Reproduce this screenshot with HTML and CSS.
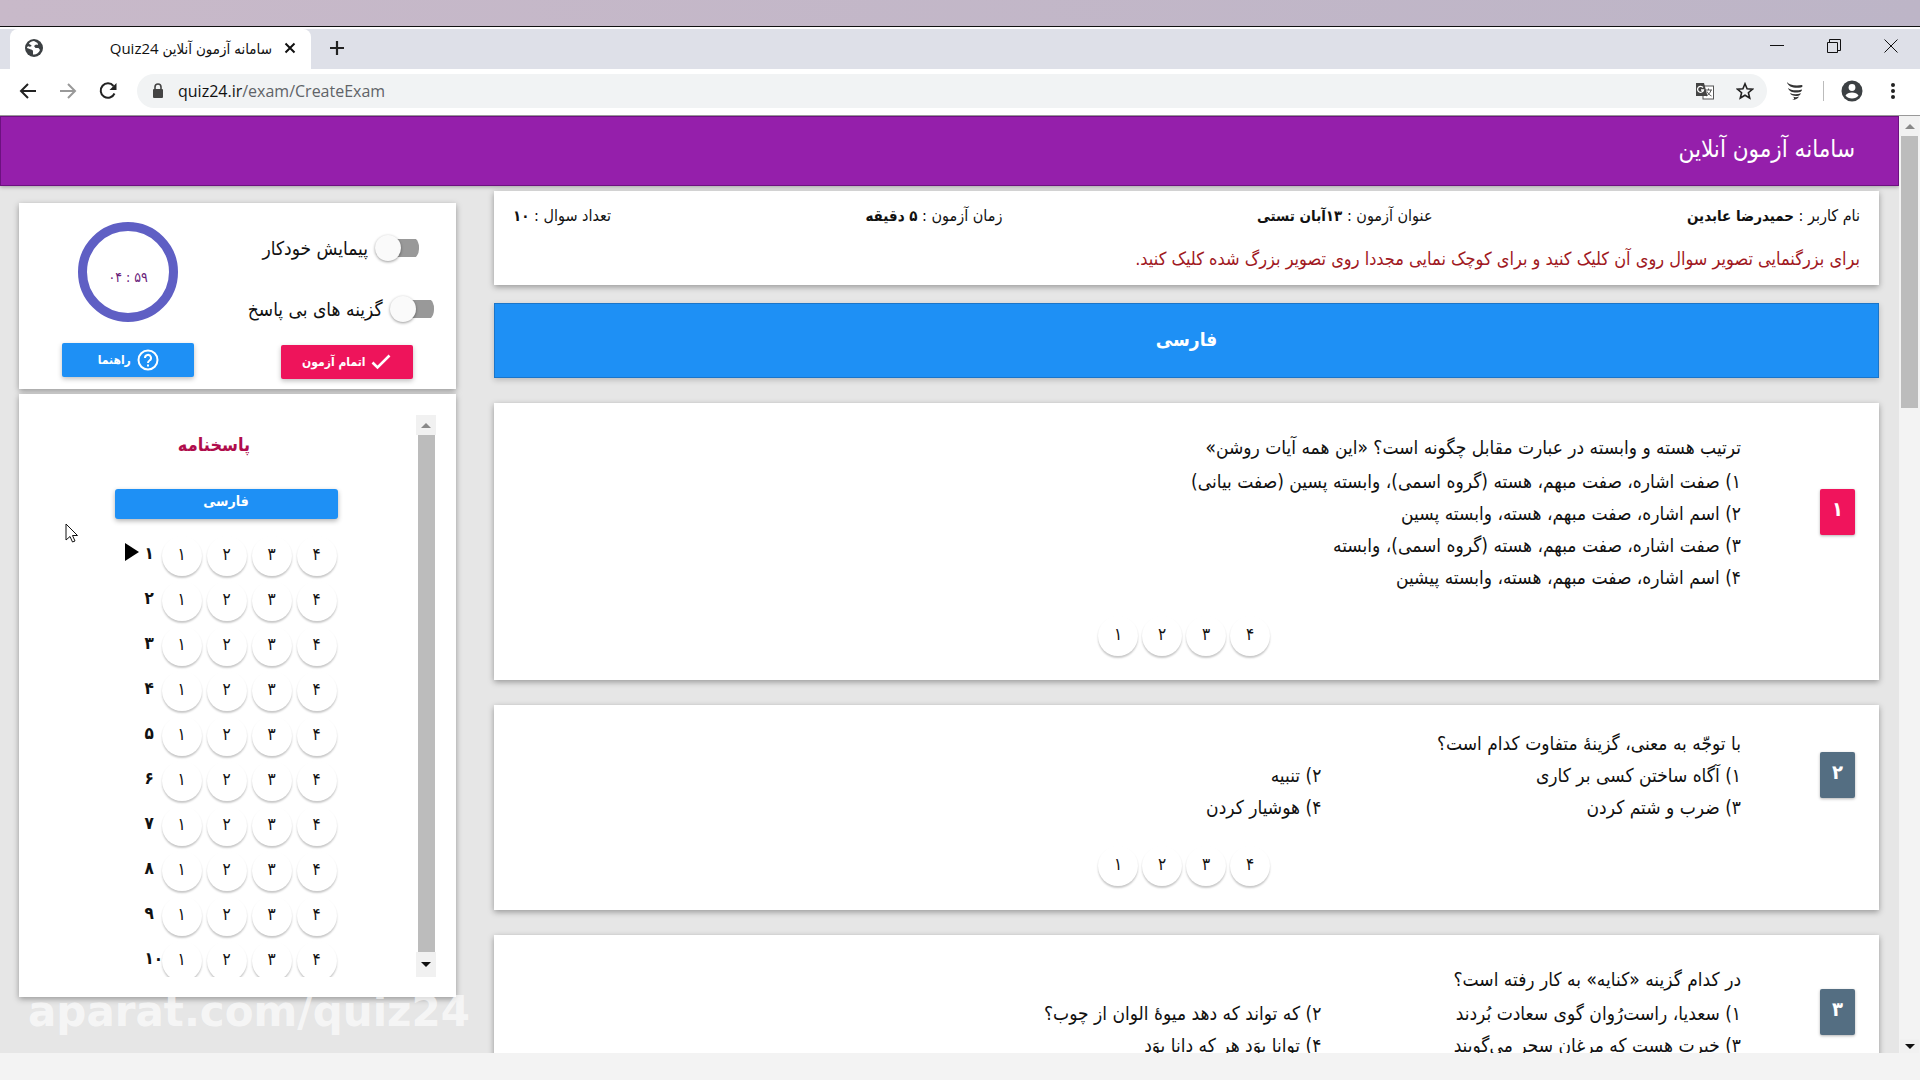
FILE: index.html
```html
<!DOCTYPE html>
<html lang="fa">
<head>
<meta charset="utf-8">
<title>سامانه آزمون آنلاین Quiz24</title>
<link rel="stylesheet" href="styles.css">
</head>
<body>
<div class="desktop-strip"></div>
<header class="browser">
  <div class="tabs">
    <span class="tab-previous"></span>
    <div class="tab">
      <svg class="globe" width="18" height="18" viewBox="0 0 18 18"><circle cx="9" cy="9" r="9" fill="#3c4043"/><path d="M9 2c-2 0-4 1-5 2.500 0 1 2 1 2.500 2s-1.500 1.500-2.500 1-2 .5-2 1.500l4 1.500c1.500 0 2 1 2 2v3c3 .5 6-1.500 7-4.500l-1.500-2h-3l-1.500-2 2-1.500 2 .5-.5-2z" fill="#fff"/></svg>
      <span class="tab-title" dir="rtl">سامانه آزمون آنلاین Quiz24</span>
      <button class="icon-button" aria-label="Close tab"><svg width="12" height="12" viewBox="0 0 12 12" stroke="#111" stroke-width="2"><path d="M1.500 1.500l9 9M10.500 1.500l-9 9"/></svg></button>
    </div>
    <button class="icon-button new-tab" aria-label="New tab"><svg width="16" height="16" viewBox="0 0 16 16" stroke="#222" stroke-width="2.200"><path d="M8 1v14M1 8h14"/></svg></button>
    <div class="window-controls">
      <button class="icon-button" aria-label="Minimize"><svg width="14" height="14" viewBox="0 0 14 14" stroke="#111"><path d="M0 6.500h14"/></svg></button>
      <button class="icon-button" aria-label="Restore"><svg width="14" height="14" viewBox="0 0 14 14" stroke="#111" fill="none"><path d="M.5 3.500h10v10H.5zM2.500 3.500v-3h11v11h-3"/></svg></button>
      <button class="icon-button" aria-label="Close"><svg width="14" height="14" viewBox="0 0 14 14" stroke="#111"><path d="M.5.5l13 13M13.500.5l-13 13"/></svg></button>
    </div>
  </div>
  <div class="toolbar">
    <button class="icon-button" aria-label="Back"><svg width="18" height="18" viewBox="0 0 18 18" fill="none" stroke="#222" stroke-width="2"><path d="M17 9H2M9 2L2 9l7 7"/></svg></button>
    <button class="icon-button" aria-label="Forward"><svg width="18" height="18" viewBox="0 0 18 18" fill="none" stroke="#999" stroke-width="2"><path d="M1 9h15M9 2l7 7-7 7"/></svg></button>
    <button class="icon-button" aria-label="Reload"><svg width="18" height="18" viewBox="0 0 18 18" fill="none" stroke="#222" stroke-width="2"><path d="M15.500 11.500A7.200 7.200 0 1 1 14.500 4"/><path d="M17.500 1v7h-7z" fill="#222" stroke="none"/></svg></button>
    <div class="address">
      <svg width="12" height="16" viewBox="0 0 12 16"><rect x="1" y="6" width="10" height="9" rx="1" fill="#444"/><path d="M3 7V4a3 3 0 0 1 6 0v3" fill="none" stroke="#444" stroke-width="1.600"/></svg>
      <span class="url">quiz24.ir<span class="url-path">/exam/CreateExam</span></span>
      <button class="icon-button translate" aria-label="Translate"><svg width="19" height="19" viewBox="0 0 19 19"><rect x="8" y="4" width="10.500" height="13" fill="#fff" stroke="#555"/><path d="M10 8h7M13.500 6.500V8M16 8c-.5 3-3 5-5 6M12 9.500c1 2 2.500 3.500 4.500 4.500" stroke="#555" fill="none"/><path d="M1 1h8l3.500 13H1z" fill="#444"/><path d="M8 5.500A3 3 0 1 0 8.500 8H6" fill="none" stroke="#fff" stroke-width="1.300"/></svg></button>
      <button class="icon-button star" aria-label="Bookmark"><svg width="18" height="18" viewBox="0 0 18 18" fill="none" stroke="#222" stroke-width="1.600"><path d="M9 1.800l2.100 5 5.400.4-4.100 3.500 1.300 5.300L9 13.200 4.300 16l1.300-5.300L1.500 7.200l5.400-.4z"/></svg></button>
    </div>
    <button class="icon-button" aria-label="Extension"><svg width="18" height="18" viewBox="0 0 18 18" fill="#333"><path d="M1 0c2 3 8 4 15 3 1 1 .5 2-1 2.500C8 6.500 2 5 1 0z"/><path d="M2 6c3 2.500 8 3 14 1.500 0 1.500-1 2.500-3 2.800C8 11 3 10 2 6z"/><path d="M4 11c3 1.500 7 1.500 11 .3-.5 1.700-2 2.500-4 2.700-3 .2-6-.5-7-3z"/><path d="M7 14.800c2 .6 4 .5 6-.2-1 2-3.500 3.400-7 3.400 2-.5 3-1.500 1-3.200z"/></svg></button>
    <span class="divider"></span>
    <button class="icon-button" aria-label="Profile"><svg width="22" height="22" viewBox="0 0 22 22"><circle cx="11" cy="11" r="10.500" fill="#3c4043"/><circle cx="11" cy="7.500" r="3.400" fill="#fff"/><path d="M4.500 15.500c2-4 11-4 13 0-2.500 4-10.500 4-13 0z" fill="#fff"/></svg></button>
    <button class="icon-button menu" aria-label="Menu"><svg width="6" height="18" viewBox="0 0 6 18" fill="#222"><circle cx="3" cy="3" r="2"/><circle cx="3" cy="9" r="2"/><circle cx="3" cy="15" r="2"/></svg></button>
  </div>
</header>

<div class="viewport">
  <div class="page">
    <div class="site-bar" dir="rtl"><h1>سامانه آزمون آنلاین</h1></div>
    <div class="columns">
      <aside class="sidebar">
        <section class="card controls">
          <div class="timer-column">
            <div class="timer"><span>۰۴ : ۵۹</span></div>
            <button class="action help" dir="rtl"><svg width="22" height="22" viewBox="0 0 22 22" fill="none" stroke="#fff" stroke-width="2"><circle cx="11" cy="11" r="9.500"/><path d="M8 9a3 3 0 1 1 4.500 2.500C11.300 12.200 11 12.500 11 14M11 15.500v2"/></svg><span>راهنما</span></button>
          </div>
          <div class="switch-column" dir="rtl">
            <label class="switch"><input type="checkbox"><span>پیمایش خودکار</span></label>
            <label class="switch"><input type="checkbox"><span>گزینه های بی پاسخ</span></label>
            <button class="action finish"><svg width="20" height="16" viewBox="0 0 20 16" fill="none" stroke="#fff" stroke-width="2.600"><path d="M1.500 8.500l5 5 12-12"/></svg><span>اتمام آزمون</span></button>
          </div>
        </section>
        <section class="card sheet">
          <div class="sheet-body">
            <h2 dir="rtl">پاسخنامه</h2>
            <div class="sheet-subject" dir="rtl">فارسی</div>
            <ol class="answers" id="answers"></ol>
          </div>
          <div class="scrollbar inner"><span class="arrow up"></span><span class="thumb"></span><span class="arrow down"></span></div>
        </section>
      </aside>
      <main class="exam" dir="rtl">
        <section class="card info">
          <div class="facts">
            <span>نام کاربر : <b>حمیدرضا عابدین</b></span>
            <span>عنوان آزمون : <b>۱۳آبان تستی</b></span>
            <span>زمان آزمون : <b>۵ دقیقه</b></span>
            <span>تعداد سوال : <b>۱۰</b></span>
          </div>
          <p class="note">برای بزرگنمایی تصویر سوال روی آن کلیک کنید و برای کوچک نمایی مجددا روی تصویر بزرگ شده کلیک کنید.</p>
        </section>
        <h2 class="subject">فارسی</h2>
        <article class="card question">
          <div class="question-row">
            <span class="badge current">۱</span>
            <div class="text">
              <p class="stem">ترتیب هسته و وابسته در عبارت مقابل چگونه است؟ «این همه آیات روشن»</p>
              <p>۱) صفت اشاره، صفت مبهم، هسته (گروه اسمی)، وابسته پسین (صفت بیانی)</p>
              <p>۲) اسم اشاره، صفت مبهم، هسته، وابسته پسین</p>
              <p>۳) صفت اشاره، صفت مبهم، هسته (گروه اسمی)، وابسته</p>
              <p>۴) اسم اشاره، صفت مبهم، هسته، وابسته پیشین</p>
            </div>
          </div>
          <div class="choices" dir="ltr"></div>
        </article>
        <article class="card question compact">
          <div class="question-row">
            <span class="badge">۲</span>
            <div class="text">
              <p class="stem">با توجّه به معنی، گزینهٔ متفاوت کدام است؟</p>
              <div class="pairs">
                <p>۱) آگاه ساختن کسی بر کاری</p><p>۲) تنبیه</p>
                <p>۳) ضرب و شتم کردن</p><p>۴) هوشیار کردن</p>
              </div>
            </div>
          </div>
          <div class="choices" dir="ltr"></div>
        </article>
        <article class="card question">
          <div class="question-row">
            <span class="badge">۳</span>
            <div class="text">
              <p class="stem">در کدام گزینه «کنایه» به کار رفته است؟</p>
              <div class="pairs">
                <p>۱) سعدیا، راست‌رُوان گوی سعادت بُردند</p><p>۲) که تواند که دهد میوهٔ الوان از چوب؟</p>
                <p>۳) خبرت هست که مرغان سحر می‌گویند</p><p>۴) توانا بوَد هر که دانا بوَد</p>
              </div>
            </div>
          </div>
          <div class="choices" dir="ltr"></div>
        </article>
      </main>
    </div>
  </div>
  <div class="scrollbar outer"><span class="arrow up"></span><span class="thumb"></span><span class="arrow down"></span></div>
  <div class="watermark">aparat.com/quiz24</div>
  <svg class="cursor" width="14" height="20" viewBox="0 0 14 20"><path d="M1 1v16l4-3.500 2.500 5.500 2.500-1-2.500-5.500h5z" fill="#fff" stroke="#111"/></svg>
</div>
<div class="bottom-strip"></div>
<script src="script.js"></script>
</body>
</html>
```
FILE: script.js
```js
const digits = ["۱", "۲", "۳", "۴"];
const numbers = ["۱", "۲", "۳", "۴", "۵", "۶", "۷", "۸", "۹", "۱۰"];
const circles = digits.map(d => `<button class="circle">${d}</button>`).join("");

document.getElementById("answers").innerHTML = numbers
  .map((n, i) => `<li><span class="marker">${i === 0 ? '<svg width="14" height="18" viewBox="0 0 14 18"><path d="M0 0l14 9-14 9z"/></svg>' : ""}</span><b>${n}</b>${circles}</li>`)
  .join("");
document.querySelectorAll(".choices").forEach(el => { el.innerHTML = circles; });
```
FILE: styles.css
```css
* { box-sizing: border-box; }
body {
  margin: 0;
  height: 100vh;
  display: flex;
  flex-direction: column;
  overflow: hidden;
  font-family: "DejaVu Sans Condensed", "DejaVu Sans", sans-serif;
  font-size: 16px;
  color: #111;
}
h1, h2, p, ol { margin: 0; padding: 0; }
button { font: inherit; border: 0; cursor: pointer; }
svg { display: block; flex: none; }

.desktop-strip { height: 27px; flex: none; background: linear-gradient(90deg, #c8b9c9, #bdb5c7); border-bottom: 1px solid #111; }
.bottom-strip { height: 27px; flex: none; background: #f3f3f3; }

.browser { flex: none; background: #fff; font-family: "Open Sans", "DejaVu Sans Condensed", sans-serif; }
.icon-button { background: none; padding: 0; display: flex; align-items: center; justify-content: center; }
.tabs { height: 42px; display: flex; align-items: center; background: #dee0e8; border-top: 2px solid #fff; }
.tab-previous { width: 10px; align-self: stretch; }
.tab { width: 301px; align-self: stretch; display: flex; align-items: center; gap: 12px; padding: 0 15px 2px; background: #fff; border-radius: 8px 8px 0 0; }
.tab-title { flex: 1; font-size: 15px; white-space: nowrap; }
.new-tab { margin-left: 18px; padding-bottom: 2px; }
.window-controls { margin-left: auto; display: flex; gap: 43px; padding: 0 22px 6px 0; }
.toolbar { height: 47px; display: flex; align-items: center; padding: 0 24px 2px 19px; border-bottom: 1px solid #999; }
.toolbar > .icon-button + .icon-button { margin-left: 22px; }
.toolbar > .icon-button + .menu { margin-left: 27px; }
.address { flex: 1; height: 34px; display: flex; align-items: center; margin: 0 19px 0 20px; padding: 0 13px 0 15px; border-radius: 17px; background: #f1f3f4; }
.url { flex: 1; margin-left: 14px; font-size: 16px; }
.url-path { color: #5f6368; }
.star { margin-left: 22px; }
.divider { width: 1px; height: 20px; margin: 0 17px 0 19px; background: #bbb; }

.viewport { flex: 1; min-height: 0; display: flex; position: relative; background: #e6e6e6; overflow: hidden; }
.page { flex: 1; min-width: 0; }
.site-bar { height: 70px; display: flex; align-items: center; padding: 0 43px 4px; background: #951fab; border: 1px solid #6d1180; box-shadow: 0 1px 4px rgba(0, 0, 0, .3); color: #fff; }
.site-bar h1 { font-size: 24px; font-weight: 400; }
.columns { display: flex; align-items: flex-start; gap: 38px; padding: 0 20px 0 19px; }
.card { background: #fff; box-shadow: 0 2px 6px rgba(0, 0, 0, .35); }

.sidebar { width: 437px; flex: none; display: flex; flex-direction: column; gap: 5px; padding-top: 17px; }
.controls { display: grid; grid-template-columns: 1fr 1fr; height: 186px; }
.timer-column { display: flex; flex-direction: column; align-items: center; gap: 21px; padding-top: 19px; }
.timer { width: 100px; height: 100px; border: 9px solid #5f5fc4; border-radius: 50%; display: flex; align-items: center; justify-content: center; padding-top: 10px; font-size: 14px; color: #6a1b7a; }
.action { width: 132px; height: 34px; display: flex; align-items: center; justify-content: center; gap: 6px; border-radius: 2px; color: #fff; font-size: 12px; font-weight: 700; box-shadow: 0 2px 5px rgba(0, 0, 0, .25); }
.help { background: #1e90f5; }
.finish { background: #ee145b; }
.switch-column { display: flex; flex-direction: column; align-items: center; gap: 16px; padding-top: 25px; }
.switch { display: flex; align-items: center; gap: 7px; height: 40px; margin-right: 12px; font-size: 19px; white-space: nowrap; }
.switch + .switch { margin-top: 5px; }
.switch input { appearance: none; width: 44px; height: 26px; margin: 0; display: flex; align-items: center; justify-content: flex-end; background: linear-gradient(#999, #999) right center / 34px 18px no-repeat; border-radius: 12px; }
.switch input::before { content: ""; width: 26px; height: 26px; border-radius: 50%; background: #fafafa; box-shadow: 0 1px 3px rgba(0, 0, 0, .4); }

.sheet { height: 603px; display: flex; padding: 21px 20px 20px 19px; }
.sheet-body { flex: 1; overflow: hidden; display: flex; flex-direction: column; align-items: center; padding-right: 2px; }
.sheet-body h2 { padding: 14px 24px 0 0; font-size: 18px; line-height: 32px; color: #b00d4c; }
.sheet-subject { flex: none; width: 223px; height: 30px; margin-top: 28px; border-radius: 3px; background: #1e90f5; box-shadow: 0 2px 5px rgba(0, 0, 0, .3); color: #fff; font-size: 14px; font-weight: 700; text-align: center; line-height: 24px; }
.answers { list-style: none; width: 223px; margin-top: 14px; }
.answers li { display: flex; align-items: center; gap: 5px; height: 45px; }
.marker { width: 14px; margin-left: 10px; padding-bottom: 8px; }
.answers b { width: 12px; white-space: nowrap; font-size: 17px; line-height: 36px; padding-bottom: 6px; margin-left: 1px; }
.circle { width: 40px; height: 40px; flex: none; padding: 0 0 4px; border-radius: 50%; background: #fff; box-shadow: 0 2px 2px rgba(0, 0, 0, .22); color: #111; font-size: 17px; }

.scrollbar { display: flex; flex-direction: column; align-items: center; background: #f3f3f3; }
.scrollbar.inner { width: 20px; background: #fff; }
.scrollbar.outer { width: 21px; padding: 0 1px; }
.arrow { width: 100%; height: 20px; flex: none; display: flex; align-items: center; justify-content: center; background: #f1f1f1; }
.arrow::before { content: ""; border: 5px solid transparent; }
.up::before { border-bottom-color: #888; border-top: 0; }
.down::before { border-top-color: #111; border-bottom: 0; }
.thumb { width: 17px; background: #bcbcbc; }
.inner .thumb { flex: 1; }
.inner .down { height: 25px; }
.outer .thumb { height: 29%; }
.outer .down { margin-top: auto; height: 14px; }

.exam { flex: 1; min-width: 0; padding-top: 5px; }
.info { height: 94px; padding: 11px 19px; }
.facts { display: flex; justify-content: space-between; line-height: 28px; font-size: 16px; white-space: nowrap; }
.facts b { font-size: 15px; }
.note { margin-top: 13px; line-height: 32px; font-size: 18px; color: #a01822; white-space: nowrap; }
.subject { height: 75px; margin: 18px 0 25px; padding-bottom: 4px; display: flex; align-items: center; justify-content: center; background: #1e90f5; border: 1px solid #1b75c9; box-shadow: 0 2px 6px rgba(0, 0, 0, .2); color: #fff; font-size: 19px; }
.question { padding: 28px 24px 24px; margin-bottom: 25px; }
.question.compact { padding-top: 22px; }
.question-row { display: grid; grid-template-columns: 114px 1fr; align-items: center; }
.badge { justify-self: start; height: 46px; padding: 0 12px; border-radius: 2px; background: #546e82; box-shadow: 0 1px 3px rgba(0, 0, 0, .3); color: #fff; font-size: 20px; font-weight: 700; line-height: 40px; }
.badge.current { background: #f0145c; }
.text { font-size: 19px; line-height: 32px; white-space: nowrap; }
.stem { margin-bottom: 2px; }
.compact .stem { margin: 0; }
.pairs { display: grid; grid-template-columns: 1fr 2fr; column-gap: 18px; }
.choices { display: flex; justify-content: center; gap: 4px; margin-top: 23px; padding-right: 5px; }

.watermark { position: absolute; left: 28px; bottom: 17px; font: 700 42px/48px "DejaVu Sans", sans-serif; color: rgba(255, 255, 255, .65); }
.cursor { position: absolute; left: 65px; top: 407px; }
```
